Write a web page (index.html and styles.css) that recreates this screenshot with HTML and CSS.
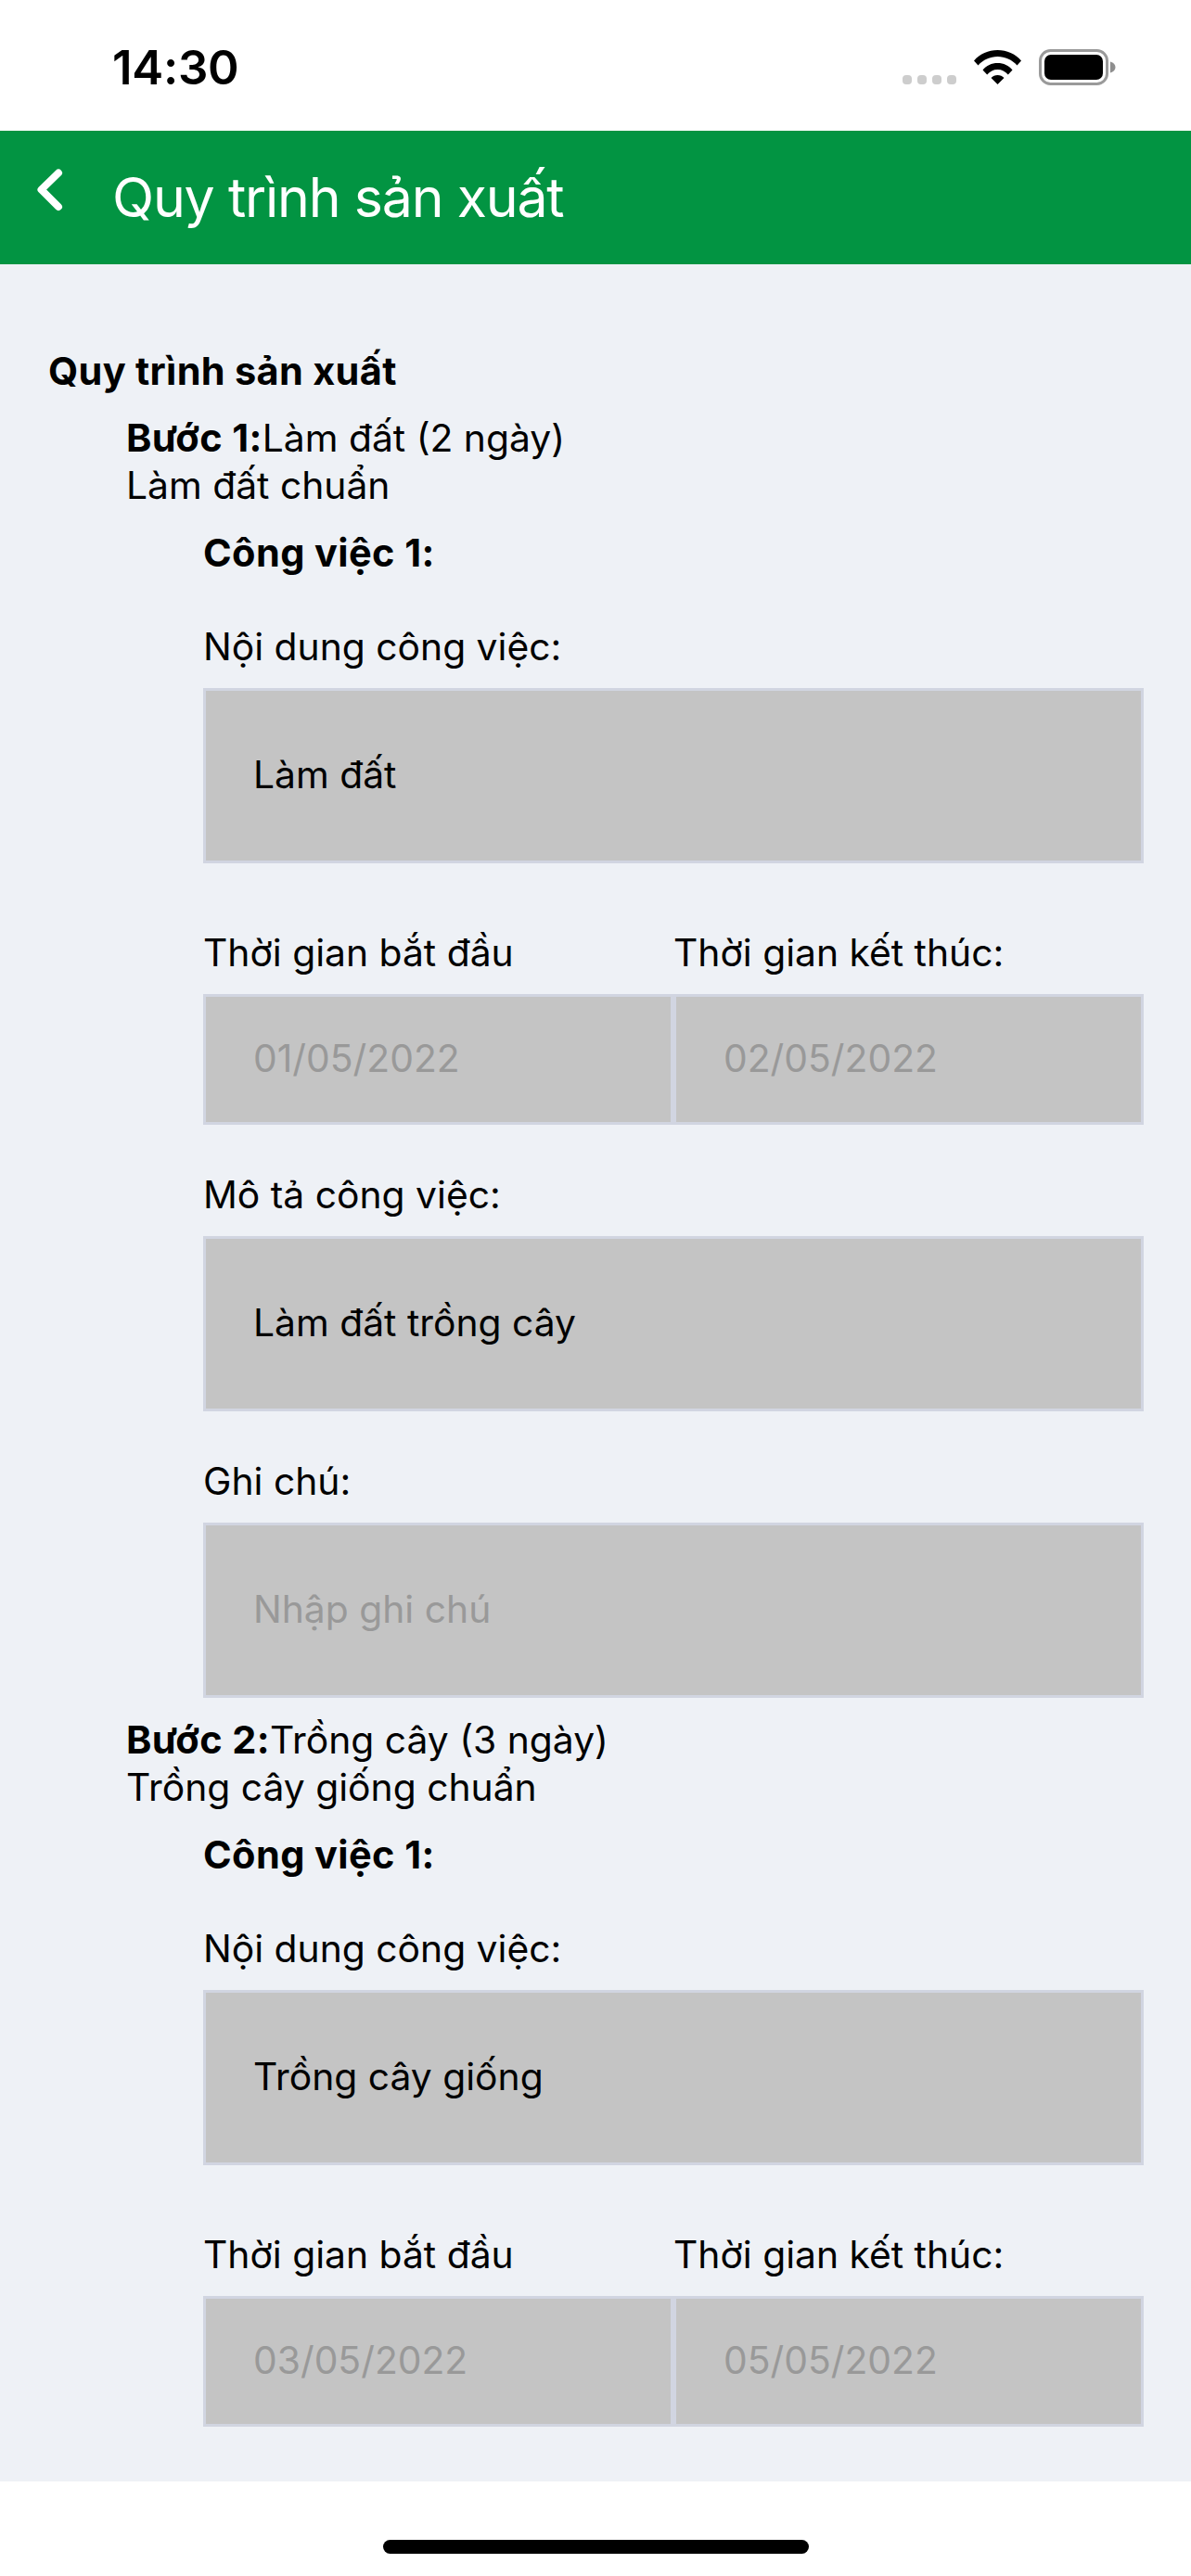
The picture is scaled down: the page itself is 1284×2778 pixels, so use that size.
FILE: index.html
```html
<!DOCTYPE html>
<html lang="vi">
<head>
<meta charset="utf-8">
<title>Quy trình sản xuất</title>
<link rel="stylesheet" href="styles.css">
</head>
<body>
<div class="app">
  <div class="status">
    <span class="time">14:30</span>
    <div class="status-icons">
      <div class="signal"><i></i><i></i><i></i><i></i></div>
      <svg class="wifi" width="51" height="37" viewBox="0 0 51 37"><path d="M0 11.500C6.500 4 15.500 0 25.500 0S44.500 4 51 11.500L46.500 16.500C41 10.500 33.500 7 25.500 7S10 10.500 4.500 16.500Z"/><path d="M9.500 21.500C13.500 16.500 19 14 25.500 14S37.500 16.500 41.500 21.500L36.800 26.500C33.800 23 30 21 25.500 21S17.200 23 14.200 26.500Z"/><path d="M18.500 30C20.300 28 22.700 27 25.500 27S30.700 28 32.500 30L25.500 37Z"/></svg>
      <svg class="battery" width="83" height="39" viewBox="0 0 83 39"><rect x="1.500" y="1.500" width="72" height="36" rx="11" fill="none" stroke="#9a9a9a" stroke-width="3"/><rect x="6" y="6" width="63" height="27" rx="7"/><path d="M77 13.500C80.500 14.500 82.500 16.800 82.500 19.500S80.500 24.500 77 25.500Z" fill="#8e8e8e"/></svg>
    </div>
  </div>
  <header class="nav">
    <svg class="back" width="29" height="46" viewBox="0 0 29 46"><path d="M24 4.500L5.500 22.500L24 41" fill="none" stroke="#fff" stroke-width="8" stroke-linecap="round" stroke-linejoin="round"/></svg>
    <h1 class="nav-title">Quy trình sản xuất</h1>
  </header>
  <main class="content">
    <h2 class="title">Quy trình sản xuất</h2>

    <section class="step">
      <p class="text"><b>Bước 1:</b>Làm đất (2 ngày)</p>
      <p class="text">Làm đất chuẩn</p>
      <div class="work">
        <p class="text work-title"><b>Công việc 1:</b></p>
        <div class="field">
          <p class="text label">Nội dung công việc:</p>
          <div class="box tall">Làm đất</div>
        </div>
        <div class="dates">
          <div class="date">
            <p class="text label">Thời gian bắt đầu</p>
            <div class="box short muted">01/05/2022</div>
          </div>
          <div class="date">
            <p class="text label">Thời gian kết thúc:</p>
            <div class="box short muted">02/05/2022</div>
          </div>
        </div>
        <div class="field">
          <p class="text label">Mô tả công việc:</p>
          <div class="box tall">Làm đất trồng cây</div>
        </div>
        <div class="field">
          <p class="text label">Ghi chú:</p>
          <div class="box tall muted">Nhập ghi chú</div>
        </div>
      </div>
    </section>

    <section class="step">
      <p class="text"><b>Bước 2:</b>Trồng cây (3 ngày)</p>
      <p class="text">Trồng cây giống chuẩn</p>
      <div class="work">
        <p class="text work-title"><b>Công việc 1:</b></p>
        <div class="field">
          <p class="text label">Nội dung công việc:</p>
          <div class="box tall">Trồng cây giống</div>
        </div>
        <div class="dates">
          <div class="date">
            <p class="text label">Thời gian bắt đầu</p>
            <div class="box short muted">03/05/2022</div>
          </div>
          <div class="date">
            <p class="text label">Thời gian kết thúc:</p>
            <div class="box short muted">05/05/2022</div>
          </div>
        </div>
      </div>
    </section>
  </main>
  <footer class="home"><span class="home-bar"></span></footer>
</div>
</body>
</html>
```

FILE: styles.css
```css
* { box-sizing: border-box; margin: 0; padding: 0; }
html, body { width: 1284px; height: 2778px; overflow: hidden; background: #fff; }
body { font-family: "Inter", "Noto Sans", sans-serif; color: #000; }
.app { width: 1284px; height: 2778px; display: flex; flex-direction: column; }

.status { height: 141px; padding: 53px 81px 0 121px; display: flex; justify-content: space-between; align-items: flex-start; flex: none; }
.time { font-size: 51px; line-height: 39px; font-weight: 600; letter-spacing: -0.3px; }
.status-icons { display: flex; align-items: flex-end; height: 39px; }
.signal { display: flex; gap: 6px; margin-right: 19px; margin-bottom: 1px; }
.signal i { width: 10px; height: 10px; border-radius: 4px; background: #cdcdcd; }
.wifi { margin-right: 19px; margin-bottom: 1px; }
.battery { display: block; }

.nav { height: 144px; background: #029442; display: flex; flex: none; padding-left: 39px; }
.back { margin-top: 41px; flex: none; }
.nav-title { margin-left: 53px; font-size: 59px; line-height: 144px; font-weight: 400; letter-spacing: -1.2px; color: #fff; }

.content { flex: 1; min-height: 0; overflow: hidden; background: #eef1f6; padding: 90px 51px 0 52px; }
.title { font-size: 41.500px; line-height: 51px; font-weight: 700; letter-spacing: 0.3px; margin-bottom: 21px; }
.text { font-size: 40.800px; line-height: 51px; font-weight: 400; }
.text b { font-size: 41.500px; font-weight: 700; letter-spacing: 0.4px; }
.step { padding-left: 84px; }
.step + .step { margin-top: 20px; }
.work { padding-left: 83px; }
.work-title { margin-top: 22px; }
.field { margin-top: 50px; }
.label { margin-bottom: 19px; }
.box { border: 3px solid #d1d5e1; background: #c4c4c4; display: flex; align-items: center; padding: 0 0 3px 51px; font-size: 40.800px; }
.tall { height: 189px; }
.short { height: 141px; }
.muted { color: #999; }
.dates { display: flex; margin-top: 71px; }
.date { flex: 1; min-width: 0; }

.home { height: 102px; flex: none; background: #fff; display: flex; justify-content: center; padding-top: 63px; }
.home-bar { width: 459px; height: 15px; border-radius: 8px; background: #000; }
```
